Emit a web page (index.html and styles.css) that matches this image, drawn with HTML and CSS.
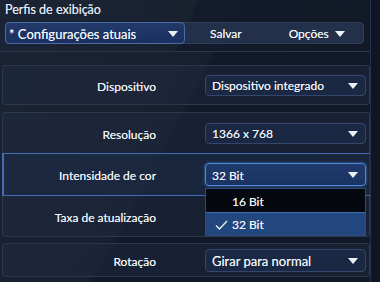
FILE: index.html
```html
<!DOCTYPE html>
<html lang="pt">
<head>
    <meta charset="UTF-8">
    <title>Perfis de exibição</title>
    <link rel="stylesheet" href="styles.css">
</head>
<body>
    <div class="screen">
        <div class="profiles">
            <div class="title">Perfis de exibição</div>
            <div class="toolbar">
                <div class="profile-select">
                    <span>* Configurações atuais</span>
                    <span class="arrow"></span>
                </div>
                <div class="actions">
                    <span class="save">Salvar</span>
                    <span class="options">Opções <span class="arrow"></span></span>
                </div>
            </div>
        </div>

        <div class="group first">
            <div class="row">
                <div class="label">Dispositivo</div>
                <div class="select"><span>Dispositivo integrado</span><span class="arrow"></span></div>
            </div>
        </div>

        <div class="group">
            <div class="row">
                <div class="label">Resolução</div>
                <div class="select"><span>1366 x 768</span><span class="arrow"></span></div>
            </div>
            <div class="row active">
                <div class="label">Intensidade de cor</div>
                <div class="select-wrap">
                    <div class="select open"><span>32 Bit</span><span class="arrow"></span></div>
                    <ul class="popup">
                        <li>16 Bit</li>
                        <li class="checked">
                            <svg class="check" width="13" height="10" viewBox="0 0 13 10"><path d="M1 5.5 L4.5 9 L12 1" fill="none" stroke="#e6edf8" stroke-width="1.4"/></svg>
                            32 Bit
                        </li>
                    </ul>
                </div>
            </div>
            <div class="row">
                <div class="label">Taxa de atualização</div>
                <div class="select"><span></span><span class="arrow"></span></div>
            </div>
        </div>

        <div class="group last">
            <div class="row">
                <div class="label">Rotação</div>
                <div class="select big"><span>Girar para normal</span><span class="arrow"></span></div>
            </div>
        </div>
    </div>
</body>
</html>
```
FILE: styles.css
```css
* { margin: 0; padding: 0; box-sizing: border-box; }
body { width: 380px; height: 282px; overflow: hidden; background: #0f1522; font-family: Lato, "Open Sans", sans-serif; color: #f2f5fa; text-shadow: 0 0 0.3px rgba(255, 255, 255, 0.7); }
.screen { width: 371px; height: 282px; background: linear-gradient(118deg, #1b2334 0%, #182030 46%, #121a29 47%, #111827 100%); border-right: 1px solid #26324a; }

.profiles { height: 52px; padding: 2px 6px 0 5px; border-bottom: 1px solid #2a364c; background: linear-gradient(115deg, #1b2436 0%, #19212f 50%, #131b2a 51%, #121a28 100%); }
.title { font-size: 12.5px; line-height: 15px; color: #e3e8f0; }
.toolbar { display: flex; height: 22px; margin-top: 5px; width: 359px; border-radius: 4px; background: #233049; border: 1px solid #2e3d59; }
.profile-select { display: flex; align-items: center; justify-content: space-between; width: 180px; margin: -1px 0 -1px -1px; padding: 1px 6px 0 3px; border: 1px solid #4a6aa3; border-radius: 4px; background: linear-gradient(#22396a, #1b3060); font-size: 13px; }
.actions { flex: 1; display: flex; align-items: center; padding-top: 1px; font-size: 12px; }
.save { margin-left: 25px; }
.options { margin-left: 47px; display: flex; align-items: center; gap: 6px; }

.arrow { width: 0; height: 0; border-left: 5px solid transparent; border-right: 5px solid transparent; border-top: 6px solid #eef2f8; }

.group { margin: 7px 0 0 2px; border: 1px solid #2c3850; border-radius: 3px; background: rgba(36, 48, 72, 0.35); }
.group.first { margin-top: 13px; }
.row { display: flex; align-items: center; height: 40px; }
.group.first .row { height: 38px; }
.row.active { height: 43px; border-top: 1px solid #3f6eb6; border-bottom: 1px solid #3f6eb6; box-shadow: inset 2px 0 0 #3f6eb6; background: rgba(28, 42, 70, 0.6); margin: 0 -1px; padding-left: 1px; padding-right: 1px; }
.label { width: 153px; padding-top: 2px; text-align: right; font-size: 12px; }
.select-wrap { position: relative; margin-left: 49px; }
.select { display: flex; align-items: center; justify-content: space-between; width: 161px; height: 21px; margin-left: 49px; padding: 1px 7px 0 6px; border: 1px solid #33466b; border-radius: 4px; background: #1a2843; font-size: 12px; }
.select-wrap .select { margin-left: 0; height: 23px; border-color: #4f8ad8; background: linear-gradient(#1f3a6c, #1b3362); box-shadow: 0 0 3px #3f78c8; }
.select.big { font-size: 13px; height: 23px; }

.popup { position: absolute; top: 25px; left: 0; width: 161px; list-style: none; border: 1px solid #2f4a77; background: #05080f; font-size: 12px; z-index: 2; }
.popup li { display: flex; align-items: center; height: 23px; padding: 1px 0 0 26px; }
.popup li.checked { padding-left: 9px; gap: 4px; background: #22477f; border-top: 1px solid #3e6db0; }
.group.last { margin-top: 6px; }
.group.last .row { height: 32px; }
```
